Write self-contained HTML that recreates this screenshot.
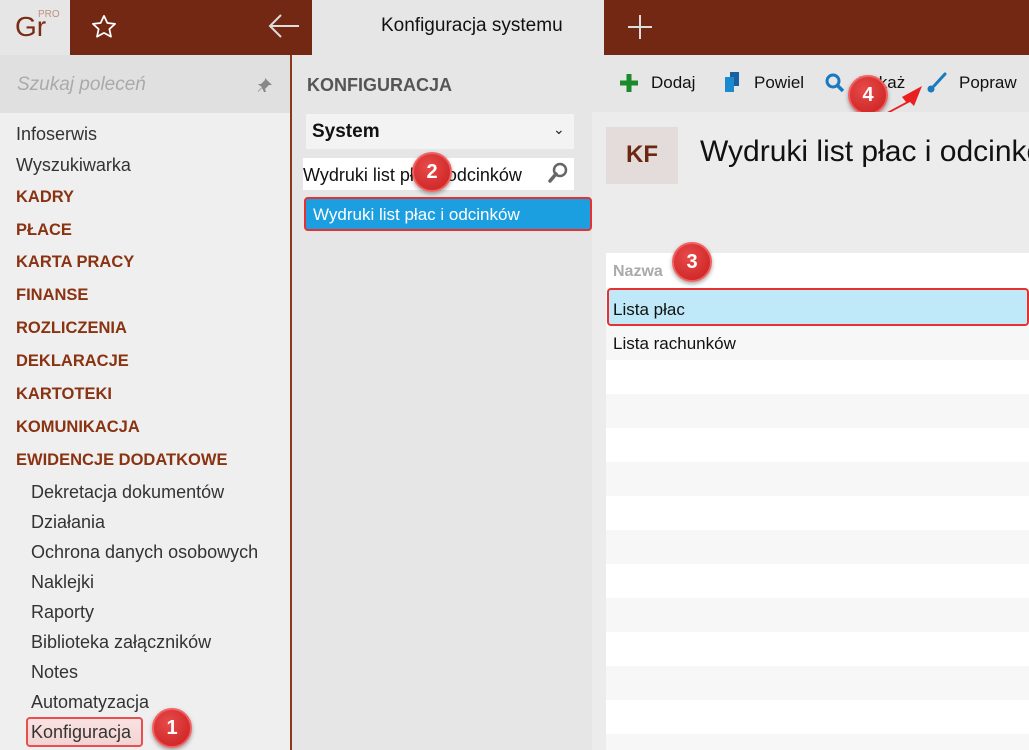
<!DOCTYPE html>
<html style="width:1029px;height:750px;overflow:hidden"><head><meta charset="utf-8"><style>
*{margin:0;padding:0;box-sizing:border-box}
body{width:1029px;height:750px;overflow:hidden;position:relative;background:#e6e6e6;font-family:"Liberation Sans",sans-serif;color:#222}
.a{position:absolute;white-space:nowrap}
.side{left:0;top:55px;width:290px;height:695px;background:#efefef}
.it{left:16px;font-size:18px;color:#333;line-height:20px}
.h{font-weight:bold;color:#8a3312;font-size:16.5px}
.sub{left:31px}
.badge{width:40px;height:40px;border-radius:50%;background:radial-gradient(circle at 40% 35%,#e84a4a,#c81e1e);color:#fff;font-size:20px;font-weight:bold;text-align:center;line-height:36px;box-shadow:0 2px 4px rgba(0,0,0,.35);border:2px solid #f26060}
.row{left:606px;width:423px;height:34px}
</style></head><body>
<div class="a" style="left:0;top:0;width:70px;height:55px;background:#e6e6e6"></div>
<div class="a" style="left:15px;top:11px;font-size:28px;color:#7a2c14">Gr</div>
<div class="a" style="left:38px;top:9px;font-size:10px;color:#c09080">PRO</div>
<div class="a" style="left:70px;top:0;width:242px;height:55px;background:#722812"></div>
<svg class="a" style="left:90px;top:13px" width="28" height="28" viewBox="0 0 24 24"><path d="M12 2.5l2.9 6.1 6.6.7-4.9 4.5 1.4 6.5L12 17l-6 3.3 1.4-6.5-4.9-4.5 6.6-.7z" fill="none" stroke="#fff" stroke-width="1.5" stroke-linejoin="round"/></svg>
<svg class="a" style="left:267px;top:12px" width="34" height="28" viewBox="0 0 34 28"><path d="M3 14h29M14 3L3 14l11 11" fill="none" stroke="#ddd" stroke-width="2"/></svg>
<div class="a" style="left:604px;top:0;width:425px;height:55px;background:#722812"></div>
<svg class="a" style="left:626px;top:13px" width="28" height="28"><path d="M14 2v24M2 14h24" stroke="#ddd" stroke-width="2"/></svg>
<div class="a" style="left:381px;top:15px;font-size:19px;color:#111">Konfiguracja systemu</div>
<div class="a side"></div>
<div class="a" style="left:0;top:55px;width:290px;height:58px;background:#e0e0e0"></div>
<div class="a" style="left:17px;top:74px;font-size:19px;color:#aaa;font-style:italic">Szukaj poleceń</div>
<svg class="a" style="left:256px;top:76px" width="18" height="18" viewBox="0 0 18 18"><path d="M9 2l7 7-3 0-4 4 1 3-2 0-2-4-4 4 0-1 4-4-3-2-1-1 3 0 4-4z" fill="#888"/></svg>
<div class="a" style="left:290px;top:55px;width:2px;height:695px;background:#8a3a1c"></div>
<div class="a it" style="top:124px">Infoserwis</div>
<div class="a it" style="top:155px">Wyszukiwarka</div>
<div class="a it h" style="top:187px">KADRY</div>
<div class="a it h" style="top:220px">PŁACE</div>
<div class="a it h" style="top:252px">KARTA PRACY</div>
<div class="a it h" style="top:285px">FINANSE</div>
<div class="a it h" style="top:318px">ROZLICZENIA</div>
<div class="a it h" style="top:351px">DEKLARACJE</div>
<div class="a it h" style="top:384px">KARTOTEKI</div>
<div class="a it h" style="top:417px">KOMUNIKACJA</div>
<div class="a it h" style="top:450px">EWIDENCJE DODATKOWE</div>
<div class="a it sub" style="top:482px">Dekretacja dokumentów</div>
<div class="a it sub" style="top:512px">Działania</div>
<div class="a it sub" style="top:542px">Ochrona danych osobowych</div>
<div class="a it sub" style="top:572px">Naklejki</div>
<div class="a it sub" style="top:602px">Raporty</div>
<div class="a it sub" style="top:632px">Biblioteka załączników</div>
<div class="a it sub" style="top:662px">Notes</div>
<div class="a it sub" style="top:692px">Automatyzacja</div>
<div class="a" style="left:26px;top:717px;width:117px;height:30px;border:2px solid #e85050;border-radius:4px;background:linear-gradient(#fbe2e2,#f3d4d4)"></div>
<div class="a it sub" style="top:722px">Konfiguracja</div>
<div class="a badge" style="left:152px;top:708px">1</div>
<div class="a" style="left:307px;top:75px;font-size:18px;font-weight:bold;color:#555">KONFIGURACJA</div>
<div class="a" style="left:306px;top:114px;width:268px;height:35px;background:#f3f3f3"></div>
<div class="a" style="left:312px;top:121px;font-size:19px;font-weight:bold;color:#111">System</div>
<div class="a" style="left:553px;top:121px;font-size:14px;color:#222">⌄</div>
<div class="a" style="left:303px;top:158px;width:271px;height:32px;background:#fff;overflow:hidden"></div>
<div class="a" style="left:303px;top:165px;font-size:18px;color:#111;width:240px;overflow:hidden">Wydruki list płac i odcinków</div>
<svg class="a" style="left:547px;top:162px" width="22" height="22" viewBox="0 0 22 22"><circle cx="13" cy="8" r="6" fill="none" stroke="#666" stroke-width="2.5"/><path d="M9 12l-6 7" stroke="#666" stroke-width="3.5" stroke-linecap="round"/></svg>
<div class="a badge" style="left:412px;top:152px">2</div>
<div class="a" style="left:304px;top:197px;width:288px;height:34px;background:#1c9fe0;border:2px solid #e83030;border-radius:4px"></div>
<div class="a" style="left:313px;top:205px;font-size:17px;color:#fff">Wydruki list płac i odcinków</div>
<svg class="a" style="left:620px;top:73px" width="18" height="20"><path d="M9 1v18M0 10h18" stroke="#1a8a2a" stroke-width="5"/></svg>
<div class="a" style="left:651px;top:73px;font-size:17px;color:#111">Dodaj</div>
<svg class="a" style="left:723px;top:72px" width="18" height="22"><rect x="7" y="0" width="9" height="14" fill="#1a5fa0"/><rect x="2" y="5" width="9" height="15" fill="#1a8ad0"/></svg>
<div class="a" style="left:754px;top:73px;font-size:17px;color:#111">Powiel</div>
<svg class="a" style="left:825px;top:73px" width="20" height="20"><circle cx="8" cy="8" r="6" fill="none" stroke="#1a7ac0" stroke-width="3"/><path d="M12 12l6 6" stroke="#1a7ac0" stroke-width="3.5"/></svg>
<div class="a" style="left:858px;top:73px;font-size:17px;color:#111">Pokaż</div>
<svg class="a" style="left:925px;top:72px" width="22" height="22"><path d="M20 2L9 14" stroke="#1a7ac0" stroke-width="3" stroke-linecap="round"/><circle cx="6" cy="17" r="3.5" fill="#1a7ac0"/></svg>
<div class="a" style="left:959px;top:73px;font-size:17px;color:#111">Popraw</div>
<svg class="a" style="left:870px;top:82px" width="60" height="40"><path d="M6 36l30-16-4-5 20-11-8 20-4-4-32 17z" fill="#e82020"/></svg>
<div class="a badge" style="left:848px;top:75px">4</div>
<div class="a" style="left:592px;top:112px;width:437px;height:638px;background:#ececec"></div>
<div class="a" style="left:606px;top:127px;width:72px;height:57px;background:#e4dcda"></div>
<div class="a" style="left:626px;top:141px;font-size:24px;font-weight:bold;color:#6a2812">KF</div>
<div class="a" style="left:700px;top:135px;font-size:30px;color:#111">Wydruki list płac i odcinków</div>
<div class="a" style="left:606px;top:253px;width:423px;height:497px;background:#fff"></div>
<div class="a row" style="top:326px;background:#f7f7f7"></div>
<div class="a row" style="top:394px;background:#f7f7f7"></div>
<div class="a row" style="top:462px;background:#f7f7f7"></div>
<div class="a row" style="top:530px;background:#f7f7f7"></div>
<div class="a row" style="top:598px;background:#f7f7f7"></div>
<div class="a row" style="top:666px;background:#f7f7f7"></div>
<div class="a row" style="top:734px;height:16px;background:#f7f7f7"></div>
<div class="a" style="left:613px;top:263px;font-size:16px;font-weight:bold;color:#aaa">Nazwa</div>
<div class="a badge" style="left:672px;top:242px">3</div>
<div class="a" style="left:607px;top:288px;width:422px;height:38px;background:#bfe9f9;border:2px solid #e83030;border-radius:4px"></div>
<div class="a" style="left:613px;top:300px;font-size:17px;color:#111">Lista płac</div>
<div class="a" style="left:613px;top:334px;font-size:17px;color:#111">Lista rachunków</div>
</body></html>
